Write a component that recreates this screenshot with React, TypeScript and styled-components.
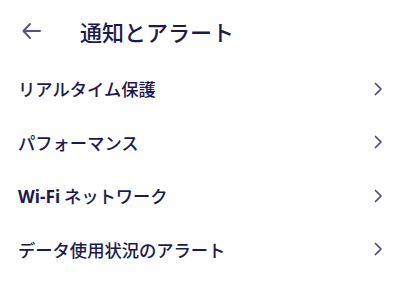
import React from "react";
import styled, { createGlobalStyle } from "styled-components";

const Global = createGlobalStyle`
  html, body { margin: 0; padding: 0; background: #ffffff; }
  body { font-family: "Noto Sans CJK JP", "Noto Sans", sans-serif; }
`;

const Page = styled.div`
  width: 400px;
  height: 308px;
  background: #ffffff;
  display: flex;
  flex-direction: column;
`;

const Header = styled.header`
  height: 62px;
  display: flex;
  align-items: center;
  padding: 0 0 0 20px;
`;

const BackButton = styled.button`
  width: 22px;
  height: 22px;
  border: none;
  background: none;
  padding: 0;
  margin-right: 38px;
  display: flex;
  align-items: center;
  justify-content: center;
  color: #58548a;
`;

const Title = styled.h1`
  margin: 0;
  font-size: 22px;
  font-weight: 500;
  color: #1b1950;
`;

const List = styled.ul`
  list-style: none;
  margin: 0;
  padding: 0;
`;

const Row = styled.li`
  height: 53.5px;
  display: flex;
  align-items: center;
  justify-content: space-between;
  padding: 0 14px 0 18px;
`;

const Label = styled.span`
  font-size: 17.3px;
  font-weight: 500;
  color: #1b1950;
`;

const Latin = styled.span`
  font-family: "Noto Sans", sans-serif;
  font-weight: 700;
`;

const Chevron = styled.svg`
  width: 16px;
  height: 16px;
  color: #4b4791;
`;

const items: React.ReactNode[] = [
  "リアルタイム保護",
  "パフォーマンス",
  <><Latin>Wi-Fi</Latin> ネットワーク</>,
  "データ使用状況のアラート",
];

export default function App() {
  return (
    <Page>
      <Global />
      <Header>
        <BackButton aria-label="戻る">
          <svg width="20" height="20" viewBox="0 0 20 20" fill="none" stroke="currentColor" strokeWidth="2" strokeLinecap="round" strokeLinejoin="round">
            <path d="M19 10H2.5M9 3L2.5 10L9 17" />
          </svg>
        </BackButton>
        <Title>通知とアラート</Title>
      </Header>
      <List>
        {items.map((it, i) => (
          <Row key={i}>
            <Label>{it}</Label>
            <Chevron viewBox="0 0 16 16" fill="none" stroke="currentColor" strokeWidth="1.7" strokeLinecap="round" strokeLinejoin="round">
              <path d="M5.5 2.5L11 8L5.5 13.5" />
            </Chevron>
          </Row>
        ))}
      </List>
    </Page>
  );
}
